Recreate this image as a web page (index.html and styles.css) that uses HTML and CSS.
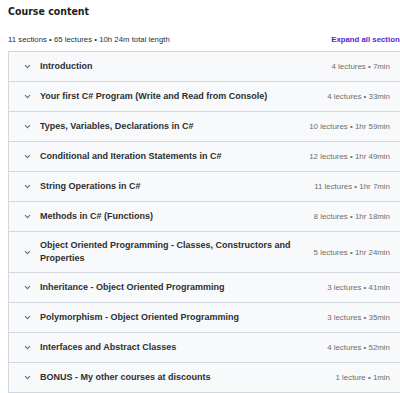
FILE: index.html
```html
<!DOCTYPE html>
<html>
<head>
    <meta charset="utf-8">
    <title>Course content</title>
    <link rel="stylesheet" href="styles.css">
</head>
<body>
    <div class="curriculum">
        <h2 class="title">Course content</h2>
        <div class="summary">
            <span class="stats">11 sections • 65 lectures • 10h 24m total length</span>
            <a href="#" class="expand">Expand all sections</a>
        </div>

        <div class="sections">
            <div class="section">
                <span class="chevron"><svg width="7" height="5" viewBox="0 0 7 5"><path d="M1 1.2l2.5 2.5 2.5-2.5" fill="none" stroke="#6a6f73" stroke-width="1.1"/></svg></span>
                <span class="name">Introduction</span>
                <span class="meta">4 lectures • 7min</span>
            </div>
            <div class="section">
                <span class="chevron"><svg width="7" height="5" viewBox="0 0 7 5"><path d="M1 1.2l2.5 2.5 2.5-2.5" fill="none" stroke="#6a6f73" stroke-width="1.1"/></svg></span>
                <span class="name">Your first C# Program (Write and Read from Console)</span>
                <span class="meta">4 lectures • 33min</span>
            </div>
            <div class="section">
                <span class="chevron"><svg width="7" height="5" viewBox="0 0 7 5"><path d="M1 1.2l2.5 2.5 2.5-2.5" fill="none" stroke="#6a6f73" stroke-width="1.1"/></svg></span>
                <span class="name">Types, Variables, Declarations in C#</span>
                <span class="meta">10 lectures • 1hr 59min</span>
            </div>
            <div class="section">
                <span class="chevron"><svg width="7" height="5" viewBox="0 0 7 5"><path d="M1 1.2l2.5 2.5 2.5-2.5" fill="none" stroke="#6a6f73" stroke-width="1.1"/></svg></span>
                <span class="name">Conditional and Iteration Statements in C#</span>
                <span class="meta">12 lectures • 1hr 49min</span>
            </div>
            <div class="section">
                <span class="chevron"><svg width="7" height="5" viewBox="0 0 7 5"><path d="M1 1.2l2.5 2.5 2.5-2.5" fill="none" stroke="#6a6f73" stroke-width="1.1"/></svg></span>
                <span class="name">String Operations in C#</span>
                <span class="meta">11 lectures • 1hr 7min</span>
            </div>
            <div class="section">
                <span class="chevron"><svg width="7" height="5" viewBox="0 0 7 5"><path d="M1 1.2l2.5 2.5 2.5-2.5" fill="none" stroke="#6a6f73" stroke-width="1.1"/></svg></span>
                <span class="name">Methods in C# (Functions)</span>
                <span class="meta">8 lectures • 1hr 18min</span>
            </div>
            <div class="section">
                <span class="chevron"><svg width="7" height="5" viewBox="0 0 7 5"><path d="M1 1.2l2.5 2.5 2.5-2.5" fill="none" stroke="#6a6f73" stroke-width="1.1"/></svg></span>
                <span class="name">Object Oriented Programming - Classes, Constructors and Properties</span>
                <span class="meta">5 lectures • 1hr 24min</span>
            </div>
            <div class="section">
                <span class="chevron"><svg width="7" height="5" viewBox="0 0 7 5"><path d="M1 1.2l2.5 2.5 2.5-2.5" fill="none" stroke="#6a6f73" stroke-width="1.1"/></svg></span>
                <span class="name">Inheritance - Object Oriented Programming</span>
                <span class="meta">3 lectures • 41min</span>
            </div>
            <div class="section">
                <span class="chevron"><svg width="7" height="5" viewBox="0 0 7 5"><path d="M1 1.2l2.5 2.5 2.5-2.5" fill="none" stroke="#6a6f73" stroke-width="1.1"/></svg></span>
                <span class="name">Polymorphism - Object Oriented Programming</span>
                <span class="meta">3 lectures • 35min</span>
            </div>
            <div class="section">
                <span class="chevron"><svg width="7" height="5" viewBox="0 0 7 5"><path d="M1 1.2l2.5 2.5 2.5-2.5" fill="none" stroke="#6a6f73" stroke-width="1.1"/></svg></span>
                <span class="name">Interfaces and Abstract Classes</span>
                <span class="meta">4 lectures • 52min</span>
            </div>
            <div class="section">
                <span class="chevron"><svg width="7" height="5" viewBox="0 0 7 5"><path d="M1 1.2l2.5 2.5 2.5-2.5" fill="none" stroke="#6a6f73" stroke-width="1.1"/></svg></span>
                <span class="name">BONUS - My other courses at discounts</span>
                <span class="meta">1 lecture • 1min</span>
            </div>
        </div>
    </div>
</body>
</html>
```

FILE: styles.css
```css
html, body {
    overflow: hidden;
}
body {
    margin: 0;
    background: #fff;
    font-family: "Liberation Sans", Arial, sans-serif;
    color: #2d2f31;
}
.curriculum {
    width: 396px;
    margin-left: 8px;
}
.title {
    margin: 0;
    padding-top: 2px;
    font-family: "DejaVu Sans Condensed", "DejaVu Sans", sans-serif;
    font-stretch: condensed;
    font-size: 10.5px;
    line-height: 18px;
    font-weight: bold;
    color: #1c1d1f;
}
.summary {
    display: flex;
    justify-content: space-between;
    align-items: center;
    height: 14px;
    margin-top: 12px;
    margin-bottom: 5px;
}
.stats {
    font-size: 7.8px;
    color: #2d2f31;
}
.expand {
    font-size: 7.8px;
    font-weight: bold;
    color: #5624d0;
    text-decoration: none;
    white-space: nowrap;
}
.sections {
    border: 1px solid #d1d7dc;
    border-bottom: none;
}
.section {
    display: flex;
    align-items: center;
    min-height: 29px;
    padding: 0 13px 0 0;
    background: #f7f9fa;
    border-bottom: 1px solid #d1d7dc;
}
.chevron {
    width: 31px;
    display: flex;
    justify-content: center;
    padding-left: 6px;
    box-sizing: border-box;
}
.name {
    flex: 1;
    font-size: 9px;
    font-weight: bold;
    line-height: 13px;
    padding: 7px 16px 7px 0;
}
.meta {
    font-size: 7.9px;
    color: #6a6f73;
    white-space: nowrap;
}
```
